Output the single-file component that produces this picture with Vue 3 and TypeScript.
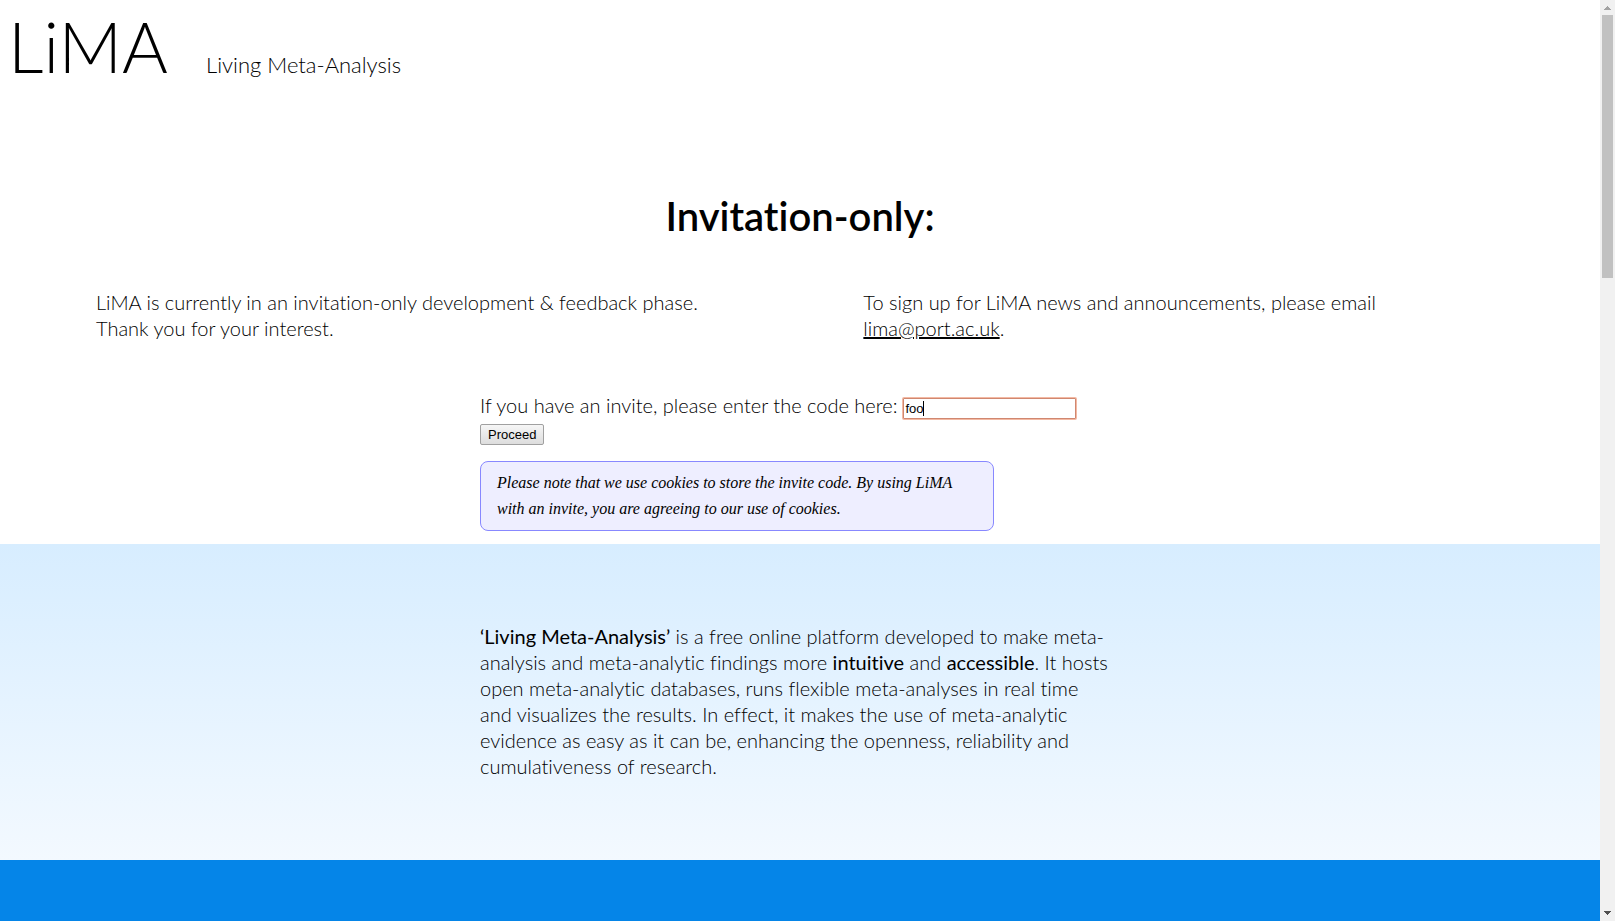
<script setup lang="ts">
import { ref } from 'vue'

const code = ref('foo')

function proceed(): void {
  code.value = code.value.trim()
}
</script>

<template>
  <div class="window">
    <div class="page">
      <header class="masthead">
        <a class="logo" href="#">LiMA</a>
        <span class="tagline">Living Meta-Analysis</span>
      </header>

      <main>
        <section class="invitation">
          <h1>Invitation-only:</h1>
          <div class="columns">
            <p>
              LiMA is currently in an invitation-only development &amp; feedback phase.<br />
              Thank you for your interest.
            </p>
            <p>
              To sign up for LiMA news and announcements, please email
              <a href="mailto:lima@port.ac.uk">lima@port.ac.uk</a>.
            </p>
          </div>

          <form class="centre" @submit.prevent="proceed">
            <div class="row">
              <label for="invite">If you have an invite, please enter the code here:</label>
              <span class="field">
                <input id="invite" v-model="code" type="text" />
                <span class="caret" aria-hidden="true"></span>
              </span>
            </div>
            <button type="submit">Proceed</button>
            <p class="note">
              Please note that we use cookies to store the invite code. By using LiMA
              with an invite, you are agreeing to our use of cookies.
            </p>
          </form>
        </section>

        <section class="about">
          <div class="centre">
            <p class="summary">
              <strong>‘Living Meta-Analysis’</strong> is a free online platform developed to make meta-<wbr />analysis
              and meta-analytic findings more <strong>intuitive</strong> and <strong>accessible</strong>. It hosts
              open meta-analytic databases, runs flexible meta-analyses in real time
              and visualizes the results. In effect, it makes the use of meta-analytic
              evidence as easy as it can be, enhancing the openness, reliability and
              cumulativeness of research.
            </p>
          </div>
        </section>

        <section class="band"></section>
      </main>
    </div>

    <div class="scrollbar" aria-hidden="true">
      <svg viewBox="0 0 15 15" shape-rendering="crispEdges">
        <path d="M7 6h1v1h1v1h1v1h1v1H4V9h1V8h1V7h1z" fill="#a3a3a3" />
      </svg>
      <div class="track"><div class="thumb"></div></div>
      <svg viewBox="0 0 15 15" shape-rendering="crispEdges">
        <path d="M4 5h7v1h-1v1H9v1H8v1H7V8H6V7H5V6H4z" fill="#505050" />
      </svg>
    </div>
  </div>
</template>

<style>
body {
  margin: 0;
}
</style>

<style scoped>
.window {
  display: flex;
  height: 100vh;
  overflow: hidden;
  background: #fff;
  color: #000;
  font: 300 20px/26px Lato, "Open Sans", sans-serif;
  font-variant-ligatures: no-common-ligatures;
}

.page {
  flex: 1;
  min-width: 0;
  display: flex;
  flex-direction: column;
}

.masthead {
  display: flex;
  align-items: baseline;
  gap: 16px;
  padding: 6px 8px 0;
  height: 190px;
  box-sizing: border-box;
}

.logo {
  min-width: 182px;
  color: #000;
  text-decoration: none;
  font-size: 70px;
  line-height: 80px;
}

.tagline {
  font-size: 22px;
}

main {
  flex: 1;
  display: flex;
  flex-direction: column;
}

h1 {
  margin: 0 0 47px;
  text-align: center;
  font-size: 40px;
  line-height: 52px;
  font-weight: 600;
}

p {
  margin: 0;
}

.columns {
  display: grid;
  grid-template-columns: 1fr 1fr;
  gap: 9%;
  padding: 0 6%;
}

.columns a {
  color: inherit;
}

.centre {
  width: 40%;
  margin: 0 auto;
}

form {
  padding: 51px 0 13px;
}

.row {
  display: flex;
  align-items: center;
  gap: 6px;
  height: 26px;
  white-space: nowrap;
}

.field {
  position: relative;
  display: flex;
  margin-top: 6px;
}

input {
  width: 173px;
  height: 21px;
  box-sizing: border-box;
  padding: 1px;
  border: 1px solid #d08770;
  border-radius: 1px;
  outline: 0;
  box-shadow: 0 0 0 1px #f3b9a3;
  background: #fff;
  color: #000;
  font: 13px "Liberation Sans", Arial, sans-serif;
}

.caret {
  position: absolute;
  left: 20px;
  top: 3px;
  width: 1px;
  height: 15px;
  background: #000;
}

button {
  display: block;
  height: 21px;
  margin: 6px 0 16px;
  padding: 0 7px;
  border: 1px solid #a0a0a0;
  border-radius: 2px;
  background: linear-gradient(#f6f6f6, #dddddd);
  color: #000;
  font: 13px/19px "Liberation Sans", Arial, sans-serif;
}

.note {
  width: 75%;
  padding: 8px 16px;
  border: 1px solid #8888ff;
  border-radius: 8px;
  background: #eeeeff;
  font: italic 16px/26px "Liberation Serif", "Times New Roman", serif;
}

.about {
  padding: 79px 0 81px;
  background: linear-gradient(#d7edff, #f3f9ff);
}

.summary {
  padding-right: 8px;
}

.band {
  flex: 1;
  background: #0585e8;
}

.scrollbar {
  display: flex;
  flex-direction: column;
  width: 15px;
  background: #f1f1f1;
}

.scrollbar svg {
  width: 15px;
  height: 15px;
}

.track {
  flex: 1;
  padding: 0 2px;
}

.thumb {
  height: 29.5%;
  background: #c1c1c1;
}
</style>
